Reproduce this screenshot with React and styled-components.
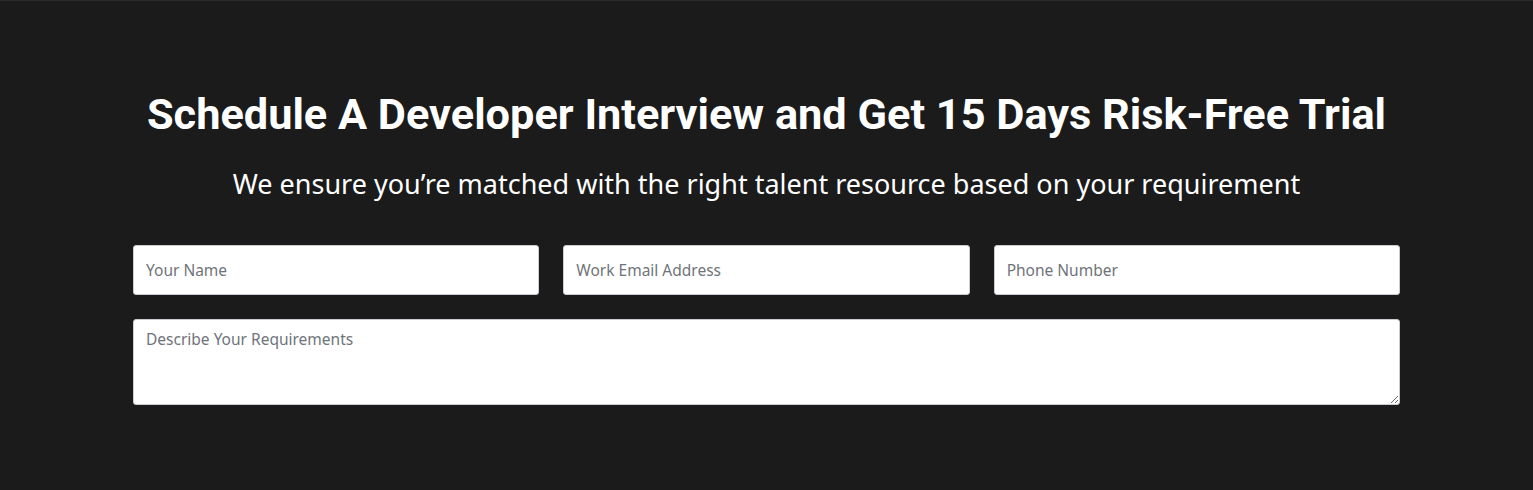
import React from 'react';
import styled, { createGlobalStyle } from 'styled-components';

const GlobalStyle = createGlobalStyle`
  html, body {
    margin: 0;
    padding: 0;
    background: #1b1b1b;
  }
  * {
    box-sizing: border-box;
  }
`;

const Section = styled.section`
  background: #1b1b1b;
  min-height: 490px;
  padding: 88px 0 40px;
  border-top: 1px solid #2a2a2a;
`;

const Container = styled.div`
  width: 1267px;
  margin: 0 auto;
`;

const Title = styled.h2`
  margin: 0;
  text-align: center;
  color: #ffffff;
  font-family: Roboto, "Liberation Sans", sans-serif;
  font-weight: 700;
  font-size: 43.3px;
  line-height: 52px;
`;

const Subtitle = styled.p`
  margin: 25px 0 0;
  text-align: center;
  color: #ffffff;
  font-family: "Noto Sans", "Open Sans", sans-serif;
  font-weight: 400;
  font-size: 27px;
  line-height: 36px;
`;

const Form = styled.form`
  margin-top: 43px;
  display: flex;
  flex-direction: column;
  gap: 24px;
`;

const Row = styled.div`
  display: grid;
  grid-template-columns: repeat(3, 1fr);
  gap: 24px;
`;

const fieldStyles = `
  width: 100%;
  border: 1px solid #c9ccd1;
  border-radius: 3px;
  background: #ffffff;
  padding: 0 12px;
  font-family: "Noto Sans", "Open Sans", sans-serif;
  font-size: 15.5px;
  color: #333;
  outline: none;

  &::placeholder {
    color: #6f747a;
  }
`;

const Input = styled.input`
  ${fieldStyles}
  height: 50px;
`;

const TextArea = styled.textarea`
  ${fieldStyles}
  display: block;
  height: 86px;
  padding-top: 8px;
  resize: vertical;
`;

export default function App() {
  return (
    <>
      <GlobalStyle />
      <Section>
        <Container>
          <Title>Schedule A Developer Interview and Get 15 Days Risk-Free Trial</Title>
          <Subtitle>We ensure you’re matched with the right talent resource based on your requirement</Subtitle>
          <Form onSubmit={(e) => e.preventDefault()}>
            <Row>
              <Input type="text" placeholder="Your Name" />
              <Input type="email" placeholder="Work Email Address" />
              <Input type="tel" placeholder="Phone Number" />
            </Row>
            <TextArea placeholder="Describe Your Requirements" />
          </Form>
        </Container>
      </Section>
    </>
  );
}
